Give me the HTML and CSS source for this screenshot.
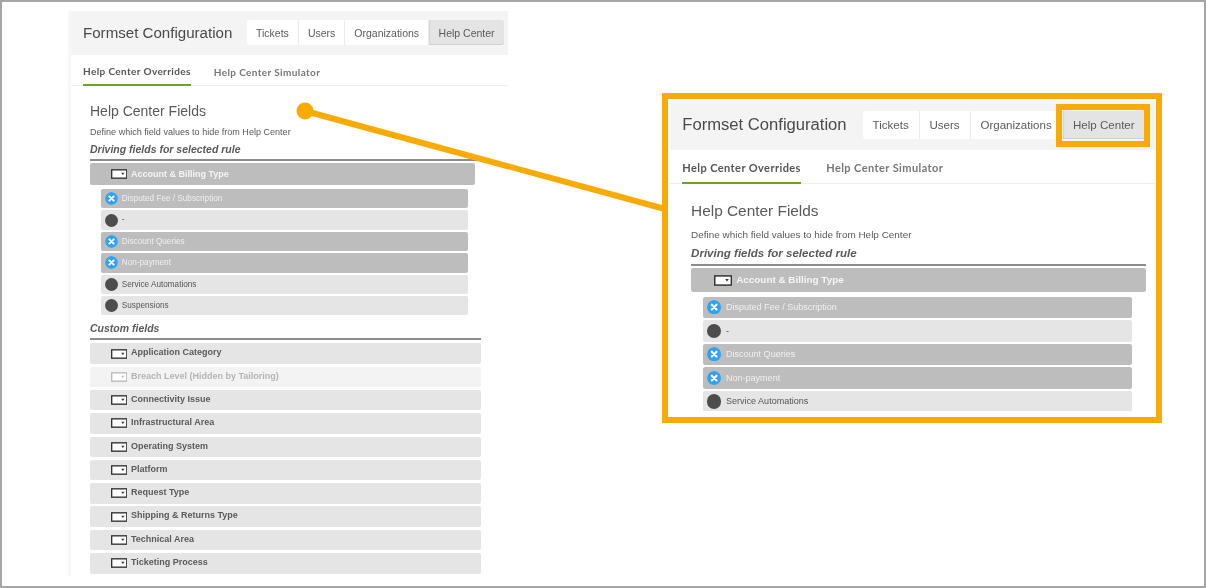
FILE: index.html
```html
<!DOCTYPE html>
<html lang="en">
<head>
<meta charset="utf-8">
<title>Formset Configuration</title>
<link rel="stylesheet" href="styles.css">
</head>
<body>
<svg class="defs" width="0" height="0" aria-hidden="true">
  <symbol id="dd" viewBox="0 0 17 10">
    <rect x="0.7" y="0.7" width="15.6" height="8.6" fill="#fff" stroke="currentColor" stroke-width="1.4"/>
    <path d="M10.5 3.6h3.4l-1.7 2.4z" fill="currentColor"/>
  </symbol>
  <symbol id="xc" viewBox="0 0 13 13">
    <circle cx="6.5" cy="6.5" r="6.5" fill="#2fa3f3"/>
    <path d="M4.3 4.3l4.4 4.4M8.7 4.3l-4.4 4.4" stroke="#fff" stroke-width="1.9" stroke-linecap="round"/>
  </symbol>
</svg>
<main class="canvas">
  <section class="shot shot-main">
    <header class="shot-head">
      <h1 class="title">Formset Configuration</h1>
      <nav class="tabs">
        <span class="tab">Tickets</span><span class="tab">Users</span><span class="tab">Organizations</span><span class="tab tab-on">Help Center</span>
      </nav>
    </header>
    <nav class="subtabs">
      <span class="subtab subtab-on">Help Center Overrides</span>
      <span class="subtab">Help Center Simulator</span>
    </nav>
    <div class="body">
      <h2 class="fields">Help Center Fields</h2>
      <p class="define">Define which field values to hide from Help Center</p>
      <h3 class="group">Driving fields for selected rule</h3>
      <div class="row row-driver"><svg class="dd"><use href="#dd"/></svg><span class="label">Account &amp; Billing Type</span></div>
      <ul class="items">
        <li class="item item-on"><svg class="dot"><use href="#xc"/></svg><span class="label">Disputed Fee / Subscription</span></li>
        <li class="item"><i class="dot dot-off"></i><span class="label">-</span></li>
        <li class="item item-on"><svg class="dot"><use href="#xc"/></svg><span class="label">Discount Queries</span></li>
        <li class="item item-on"><svg class="dot"><use href="#xc"/></svg><span class="label">Non-payment</span></li>
        <li class="item"><i class="dot dot-off"></i><span class="label">Service Automations</span></li>
        <li class="item"><i class="dot dot-off"></i><span class="label">Suspensions</span></li>
      </ul>
      <h3 class="group group-custom">Custom fields</h3>
      <div class="rows">
        <div class="row"><svg class="dd"><use href="#dd"/></svg><span class="label">Application Category</span></div>
        <div class="row row-hidden"><svg class="dd"><use href="#dd"/></svg><span class="label">Breach Level (Hidden by Tailoring)</span></div>
        <div class="row"><svg class="dd"><use href="#dd"/></svg><span class="label">Connectivity Issue</span></div>
        <div class="row"><svg class="dd"><use href="#dd"/></svg><span class="label">Infrastructural Area</span></div>
        <div class="row"><svg class="dd"><use href="#dd"/></svg><span class="label">Operating System</span></div>
        <div class="row"><svg class="dd"><use href="#dd"/></svg><span class="label">Platform</span></div>
        <div class="row"><svg class="dd"><use href="#dd"/></svg><span class="label">Request Type</span></div>
        <div class="row"><svg class="dd"><use href="#dd"/></svg><span class="label">Shipping &amp; Returns Type</span></div>
        <div class="row"><svg class="dd"><use href="#dd"/></svg><span class="label">Technical Area</span></div>
        <div class="row"><svg class="dd"><use href="#dd"/></svg><span class="label">Ticketing Process</span></div>
      </div>
    </div>
  </section>

  <svg class="connector" viewBox="0 0 1206 588" aria-hidden="true">
    <circle cx="305" cy="111" r="8.5"/>
    <line x1="305" y1="111" x2="665" y2="209"/>
  </svg>

  <aside class="callout">
    <section class="shot shot-zoom">
      <header class="shot-head">
        <h1 class="title">Formset Configuration</h1>
        <nav class="tabs">
          <span class="tab">Tickets</span><span class="tab">Users</span><span class="tab">Organizations</span><span class="tab tab-on">Help Center</span>
        </nav>
      </header>
      <nav class="subtabs">
        <span class="subtab subtab-on">Help Center Overrides</span>
        <span class="subtab">Help Center Simulator</span>
      </nav>
      <div class="body">
        <h2 class="fields">Help Center Fields</h2>
        <p class="define">Define which field values to hide from Help Center</p>
        <h3 class="group">Driving fields for selected rule</h3>
        <div class="row row-driver"><svg class="dd"><use href="#dd"/></svg><span class="label">Account &amp; Billing Type</span></div>
        <ul class="items">
          <li class="item item-on"><svg class="dot"><use href="#xc"/></svg><span class="label">Disputed Fee / Subscription</span></li>
          <li class="item"><i class="dot dot-off"></i><span class="label">-</span></li>
          <li class="item item-on"><svg class="dot"><use href="#xc"/></svg><span class="label">Discount Queries</span></li>
          <li class="item item-on"><svg class="dot"><use href="#xc"/></svg><span class="label">Non-payment</span></li>
          <li class="item"><i class="dot dot-off"></i><span class="label">Service Automations</span></li>
        </ul>
      </div>
    </section>
    <div class="tab-mark"></div>
  </aside>
</main>
</body>
</html>
```
FILE: styles.css
```css
* { box-sizing: border-box; }
html, body { margin: 0; padding: 0; background: #fff; }
.defs { position: absolute; }
.canvas {
  position: relative;
  width: 1206px;
  height: 588px;
  border: 2px solid #a6a6a6;
  overflow: hidden;
  font-family: "Liberation Sans", Arial, sans-serif;
  color: #555;
}

/* shared screenshot component */
.shot {
  --list-w: 391px;
  --driver-r: 6px;
  --head-pad: 12px;
  position: absolute;
  background: #fff;
  overflow: hidden;
  filter: blur(0.35px);
}
.shot-main {
  left: 66px;
  top: 9px;
  width: 440px;
  height: 565px;
  border-left: 3px solid #f7f7f7;
}
.shot-zoom {
  --list-w: 413.5px;
  --driver-r: 0px;
  --head-pad: 11px;
  left: 2px;
  top: 2px;
  width: 441px;
  height: 282px;
  zoom: 1.1;
}
.shot-head {
  display: flex;
  align-items: center;
  height: 44px;
  padding: 0 0 1px var(--head-pad);
  background: #f4f4f4;
}
.title {
  flex: none;
  width: 149px;
  margin: 0 15px 0 0;
  white-space: nowrap;
  font-size: 15.1px;
  font-weight: 400;
  color: #4a4a4a;
}
.tabs { display: flex; height: 25px; }
.tab {
  display: flex;
  align-items: center;
  padding: 0 9px;
  background: #fff;
  border-right: 1px solid #ececec;
  font-size: 10.5px;
  color: #5a5a5a;
  white-space: nowrap;
}
.tab:first-child { border-radius: 3px 0 0 3px; }
.tab-on {
  padding: 0 9.5px;
  background: #e4e4e4;
  border-right: 0;
  border-radius: 0 3px 3px 0;
  box-shadow: inset 1px 0 1px #d6d6d6, inset 0 -1px 0 #d0d0d0;
}
.subtabs {
  display: flex;
  gap: 23px;
  height: 31px;
  padding-left: var(--head-pad);
  border-bottom: 1px solid #eee;
}
.subtab {
  display: flex;
  align-items: center;
  height: 30px;
  padding-top: 3px;
  font-family: Lato, sans-serif;
  font-size: 10px;
  font-weight: 700;
  letter-spacing: 0.38px;
  color: #777;
  white-space: nowrap;
}
.subtab-on {
  height: 31px;
  color: #555;
  border-bottom: 2px solid #6ba421;
}
.body { padding: 16px 0 0 19px; }
.fields {
  margin: 0;
  font-size: 14px;
  line-height: 18px;
  font-weight: 400;
  color: #5a5a5a;
}
.define {
  margin: 6px 0 0;
  font-size: 9.05px;
  line-height: 12px;
  color: #5a5a5a;
}
.group {
  width: var(--list-w);
  margin: 5px 0 0;
  padding-bottom: 3px;
  border-bottom: 2px solid #8c8c8c;
  font-size: 10.5px;
  line-height: 13px;
  font-style: italic;
  font-weight: 700;
  color: #5a5a5a;
}
.group-custom { margin-top: 7px; }
.row {
  display: flex;
  align-items: center;
  width: var(--list-w);
  height: 20.5px;
  padding-left: 20.8px;
  background: #e5e5e5;
  border-radius: 2px;
  font-size: 9px;
  font-weight: 700;
  color: #5a5a5a;
  white-space: nowrap;
}
.label { position: relative; top: -1.2px; }
.row-driver {
  width: calc(var(--list-w) - var(--driver-r));
  height: 22px;
  margin-top: 2px;
  background: #bdbdbd;
  color: #f5f5f5;
}
.row-driver .label { top: -0.3px; }
.row-hidden { background: #f3f3f3; color: #b4b4b4; }
.dd {
  flex: none;
  width: 16.5px;
  height: 10px;
  margin-right: 3.7px;
  color: #333;
}
.row-hidden .dd { color: #bbb; }
.rows {
  display: flex;
  flex-direction: column;
  gap: 2.8px;
  margin-top: 3px;
}
.items {
  display: flex;
  flex-direction: column;
  gap: 2px;
  width: var(--list-w);
  margin: 4px 0 0;
  padding: 0 13px 0 11px;
  list-style: none;
}
.item {
  display: flex;
  align-items: center;
  height: 19.4px;
  padding-left: 3.5px;
  background: #e5e5e5;
  border-radius: 2px;
  font-size: 8.2px;
  color: #555;
  white-space: nowrap;
}
.item .label { top: -0.2px; }
.item-on { background: #bdbdbd; color: #f0f0f0; }
.dot {
  flex: none;
  display: block;
  width: 13px;
  height: 13px;
  margin-right: 4.3px;
  border-radius: 50%;
}
.dot-off { background: #4d4d4d; }

/* annotation layer */
.connector {
  position: absolute;
  left: -2px;
  top: -2px;
  width: 1206px;
  height: 588px;
  fill: #f9ab05;
  stroke: #f9ab05;
  stroke-width: 6;
}
.connector circle { stroke: none; }
.callout {
  position: absolute;
  left: 660px;
  top: 91px;
  width: 500px;
  height: 330px;
  border: 6px solid #f9ab05;
  background: #fff;
}
.tab-mark {
  position: absolute;
  left: 388px;
  top: 5px;
  width: 94px;
  height: 43px;
  border: 6px solid #f9ab05;
}
```
